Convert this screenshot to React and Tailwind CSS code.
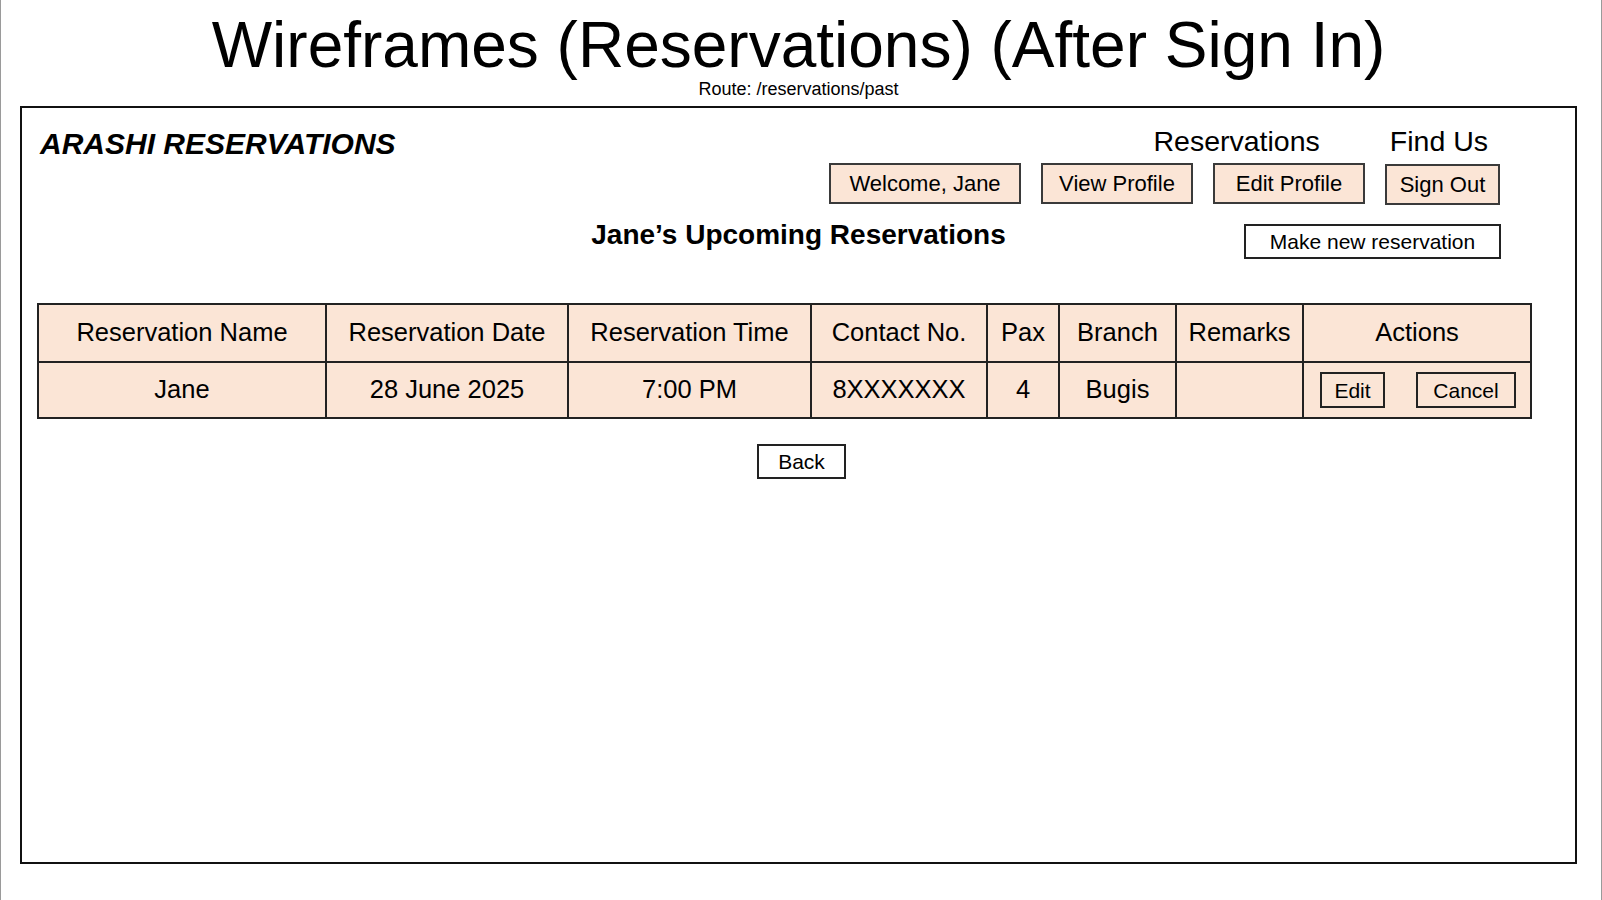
import React from "react";

const headers = [
  { label: "Reservation Name", w: "w-[288px]" },
  { label: "Reservation Date", w: "w-[242px]" },
  { label: "Reservation Time", w: "w-[243px]" },
  { label: "Contact No.", w: "w-[176px]" },
  { label: "Pax", w: "w-[72px]" },
  { label: "Branch", w: "w-[117px]" },
  { label: "Remarks", w: "w-[127px]" },
  { label: "Actions", w: "w-[228px]" },
];

const row = ["Jane", "28 June 2025", "7:00 PM", "8XXXXXXX", "4", "Bugis", ""];

function PeachButton({ children, w }) {
  return (
    <div
      className={`${w} h-[41px] flex items-center justify-center bg-[#fbe5d6] border-2 border-[#3a3a3a] text-[22px] leading-none`}
    >
      {children}
    </div>
  );
}

export default function App() {
  return (
    <div
      className="w-full h-[900px] bg-white border-x border-[#9a9a9a] pl-[19px] text-black overflow-hidden"
      style={{ fontFamily: '"Liberation Sans", Arial, sans-serif' }}
    >
      {/* slide title */}
      <div className="w-[1557px] pt-[13px]">
        <h1 className="text-center text-[64px] leading-[64px] font-normal">
          Wireframes (Reservations) (After Sign In)
        </h1>
        <p className="text-center text-[18px] leading-[20px] mt-[2px]">Route: /reservations/past</p>
      </div>

      {/* wireframe frame */}
      <div className="mt-[7px] w-[1557px] h-[758px] border-2 border-[#111]">
        {/* top header */}
        <div className="flex items-start">
          <div className="ml-[18px] mt-[20px] text-[30px] leading-[32px] font-bold italic">
            ARASHI RESERVATIONS
          </div>
          <div className="ml-auto flex gap-[70px] mt-[17px] mr-[87px] text-[28.5px] leading-[32px]">
            <span>Reservations</span>
            <span>Find Us</span>
          </div>
        </div>

        <div className="flex justify-end items-start gap-[20px] mr-[75px] mt-[3px]">
          <PeachButton w="w-[192px]">Welcome, Jane</PeachButton>
          <PeachButton w="w-[152px]">View Profile</PeachButton>
          <PeachButton w="w-[152px]">Edit Profile</PeachButton>
          <div className="mt-[1px]">
            <PeachButton w="w-[115px]">Sign Out</PeachButton>
          </div>
        </div>

        {/* heading row */}
        <div className="grid grid-cols-[1fr_auto_1fr] items-start mt-[14px]">
          <div />
          <h2 className="text-[28px] leading-[32px] font-bold">Jane’s Upcoming Reservations</h2>
          <div className="flex justify-end pr-[74px]">
            <div className="mt-[5px] w-[257px] h-[35px] flex items-center justify-center border-2 border-[#222] text-[21px] leading-none">
              Make new reservation
            </div>
          </div>
        </div>

        {/* table */}
        <table className="ml-[15px] mt-[44px] border-collapse bg-[#fbe5d6] text-[25.5px] leading-none">
          <thead>
            <tr>
              {headers.map((h) => (
                <th
                  key={h.label}
                  className={`${h.w} h-[58px] border-2 border-[#222] font-normal text-center`}
                >
                  {h.label}
                </th>
              ))}
            </tr>
          </thead>
          <tbody>
            <tr>
              {row.map((c, i) => (
                <td key={i} className="h-[56px] border-2 border-[#222] text-center">
                  {c}
                </td>
              ))}
              <td className="h-[56px] border-2 border-[#222]">
                <div className="flex justify-between pl-[16px] pr-[14px] text-[21px]">
                  <span className="w-[65px] h-[36px] flex items-center justify-center border-2 border-[#222]">
                    Edit
                  </span>
                  <span className="w-[100px] h-[36px] flex items-center justify-center border-2 border-[#222]">
                    Cancel
                  </span>
                </div>
              </td>
            </tr>
          </tbody>
        </table>

        <div className="flex justify-center mt-[25px]">
          <div className="ml-[6px] w-[89px] h-[35px] flex items-center justify-center border-2 border-[#222] text-[21px] leading-none">
            Back
          </div>
        </div>
      </div>
    </div>
  );
}
